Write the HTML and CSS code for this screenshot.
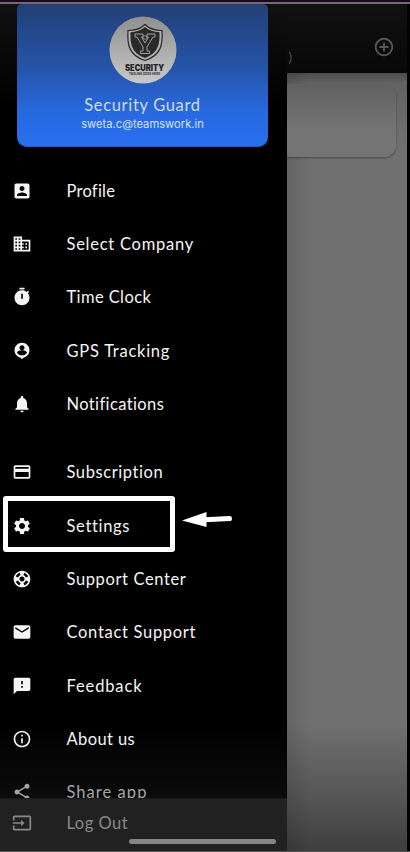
FILE: index.html
```html
<!DOCTYPE html>
<html lang="en">
<head>
<meta charset="utf-8">
<title>Security Guard menu</title>
<link rel="stylesheet" href="styles.css">
</head>
<body>
<main class="screen">
  <section class="page">
    <header class="topbar">
      <span class="paren">)</span>
      <svg class="add" viewBox="0 0 24 24"><path d="M13 7h-2v4H7v2h4v4h2v-4h4v-2h-4V7zm-1-5C6.480 2 2 6.480 2 12s4.480 10 10 10 10-4.480 10-10S17.520 2 12 2zm0 18c-4.410 0-8-3.590-8-8s3.590-8 8-8 8 3.590 8 8-3.590 8-8 8z"/></svg>
    </header>
    <div class="content"><div class="card"></div></div>
  </section>
  <aside class="drawer">
    <div class="account">
      <svg class="avatar" viewBox="0 0 68 68">
        <defs><linearGradient id="silver" x2="0" y2="1"><stop offset="0" stop-color="#8f8f8f"/><stop offset="1" stop-color="#c9c9c9"/></linearGradient></defs>
        <circle cx="34" cy="34" r="33.500" fill="url(#silver)"/>
        <path d="M36 8.500c-4 4-10 6-17 6-1 14 1 25 17 30 16-5 18-16 17-30-7 0-13-2-17-6z" fill="#b0b0b0" stroke="#292929" stroke-width="1.200"/>
        <path d="M36 11c-4 3.500-9 5-14.500 5.300-.5 12 1.500 21 14.500 25.700 13-4.700 15-13.700 14.500-25.700C45 16 40 14.500 36 11z" fill="#292929"/>
        <path d="M26 18h8v3h-1.500l3.500 6 3.500-6H38v-3h8v3h-2l-6 10v4h2.500v2.500h-9V35H34v-4l-6-10h-2z" fill="#292929" stroke="#aaa" stroke-width=".9"/>
        <circle cx="36" cy="21.500" r="1.800" fill="#292929" stroke="#aaa" stroke-width=".7"/>
        <text class="brand" x="16" y="54.500" textLength="39" lengthAdjust="spacingAndGlyphs">SECURITY</text>
        <text class="tagline" x="20" y="59" textLength="31" lengthAdjust="spacingAndGlyphs">TAGLINE GOES HERE</text>
      </svg>
      <div class="name">Security Guard</div>
      <div class="email">sweta.c@teamswork.in</div>
    </div>
    <nav class="menu">
      <a class="item"><svg viewBox="0 0 24 24"><path d="M3 5v14c0 1.100.89 2 2 2h14c1.100 0 2-.9 2-2V5c0-1.100-.9-2-2-2H5c-1.110 0-2 .9-2 2zm12 4c0 1.660-1.340 3-3 3s-3-1.340-3-3 1.340-3 3-3 3 1.340 3 3zm-9 8c0-2 4-3.100 6-3.100s6 1.100 6 3.100v1H6v-1z"/></svg><span class="profile">Profile</span></a>
      <a class="item"><svg viewBox="0 0 24 24"><path d="M12 7V3H2v18h20V7H12zM6 19H4v-2h2v2zm0-4H4v-2h2v2zm0-4H4V9h2v2zm0-4H4V5h2v2zm4 12H8v-2h2v2zm0-4H8v-2h2v2zm0-4H8V9h2v2zm0-4H8V5h2v2zm10 12h-8v-2h2v-2h-2v-2h2v-2h-2V9h8v10zm-2-8h-2v2h2v-2zm0 4h-2v2h2v-2z"/></svg><span class="company">Select Company</span></a>
      <a class="item"><svg viewBox="0 0 24 24"><path fill-rule="evenodd" d="M15 1H9v2h6V1zm-4 13h2V8h-2v6zm8.030-6.610l1.420-1.420c-.43-.51-.9-.99-1.410-1.410l-1.420 1.420C16.070 4.740 14.120 4 12 4c-4.970 0-9 4.030-9 9s4.020 9 9 9 9-4.030 9-9c0-2.120-.74-4.070-1.970-5.610z"/></svg><span class="clock">Time Clock</span></a>
      <a class="item"><svg viewBox="0 0 24 24"><path d="M12 2C7.030 2 3 6 3 11c0 4.200 2.900 7.800 6.900 8.800L12 22l2.100-2.200C18.100 18.800 21 15.200 21 11c0-5-4-9-9-9zm0 3c1.660 0 3 1.340 3 3s-1.340 3-3 3-3-1.340-3-3 1.340-3 3-3zm0 12.200c-2.500 0-4.700-1.200-6-3.100.03-2 4-3 6-3s5.970 1 6 3c-1.300 1.900-3.500 3.100-6 3.100z"/></svg><span class="tracking">GPS Tracking</span></a>
      <a class="item"><svg viewBox="0 0 24 24"><path d="M12 22c1.100 0 2-.9 2-2h-4c0 1.100.89 2 2 2zm6-6v-5c0-3.070-1.640-5.640-4.500-6.320V4c0-.83-.67-1.500-1.500-1.500s-1.500.67-1.500 1.500v.68C7.630 5.360 6 7.920 6 11v5l-2 2v1h16v-1l-2-2z"/></svg><span class="notifications">Notifications</span></a>
      <a class="item group-start"><svg viewBox="0 0 24 24"><path d="M20 4H4c-1.110 0-2 .89-2 2v12c0 1.110.89 2 2 2h16c1.110 0 2-.89 2-2V6c0-1.110-.89-2-2-2zm0 14H4v-6h16v6zm0-10H4V6h16v2z"/></svg><span class="subscription">Subscription</span></a>
      <a class="item"><svg viewBox="0 0 24 24"><path d="M19.140 12.940c.04-.3.060-.61.060-.94 0-.32-.02-.64-.07-.94l2.030-1.580c.18-.14.230-.41.120-.61l-1.920-3.320c-.12-.22-.37-.29-.59-.22l-2.390.96c-.5-.38-1.030-.7-1.620-.94l-.36-2.540c-.04-.24-.24-.41-.48-.41h-3.840c-.24 0-.43.17-.47.41l-.36 2.540c-.59.24-1.130.57-1.620.94l-2.390-.96c-.22-.08-.47 0-.59.22L2.740 8.870c-.12.210-.08.470.12.610l2.030 1.580c-.05.3-.09.630-.09.940s.02.640.07.940l-2.030 1.580c-.18.14-.23.410-.12.610l1.920 3.320c.12.220.370.290.590.220l2.390-.96c.5.380 1.030.7 1.620.94l.36 2.540c.05.240.24.410.48.410h3.840c.24 0 .44-.17.470-.41l.36-2.540c.59-.24 1.130-.56 1.620-.94l2.390.96c.22.080.470 0 .59-.22l1.920-3.320c.12-.22.070-.47-.12-.61l-2.010-1.580zM12 15.600c-1.980 0-3.600-1.620-3.600-3.600s1.620-3.600 3.600-3.600 3.600 1.620 3.600 3.600-1.620 3.600-3.600 3.600z"/></svg><span class="settings">Settings</span></a>
      <a class="item"><svg viewBox="0 0 24 24"><path d="M12 2C6.480 2 2 6.480 2 12s4.480 10 10 10 10-4.480 10-10S17.520 2 12 2zm7.460 7.120l-2.780 1.150c-.51-1.360-1.580-2.440-2.950-2.940l1.150-2.780c2.100.8 3.770 2.470 4.580 4.570zM12 15c-1.660 0-3-1.340-3-3s1.340-3 3-3 3 1.340 3 3-1.340 3-3 3zM9.130 4.540l1.170 2.780c-1.380.5-2.470 1.590-2.980 2.970L4.540 9.130c.81-2.110 2.480-3.780 4.590-4.590zM4.540 14.870l2.780-1.150c.51 1.380 1.590 2.460 2.970 2.960l-1.170 2.780c-2.100-.81-3.770-2.480-4.580-4.590zm10.340 4.590l-1.150-2.780c1.370-.51 2.450-1.590 2.950-2.970l2.780 1.170c-.81 2.100-2.480 3.770-4.580 4.580z"/></svg><span class="support">Support Center</span></a>
      <a class="item"><svg viewBox="0 0 24 24"><path d="M20 4H4c-1.100 0-1.990.9-1.990 2L2 18c0 1.100.9 2 2 2h16c1.100 0 2-.9 2-2V6c0-1.100-.9-2-2-2zm0 4l-8 5-8-5V6l8 5 8-5v2z"/></svg><span class="contact">Contact Support</span></a>
      <a class="item"><svg viewBox="0 0 24 24"><path d="M20 2H4c-1.100 0-1.990.9-1.990 2L2 22l4-4h14c1.100 0 2-.9 2-2V4c0-1.100-.9-2-2-2zm-7 12h-2v-2h2v2zm0-4h-2V6h2v4z"/></svg><span class="feedback">Feedback</span></a>
      <a class="item"><svg viewBox="0 0 24 24"><path d="M11 7h2v2h-2zm0 4h2v6h-2zm1-9C6.480 2 2 6.480 2 12s4.480 10 10 10 10-4.480 10-10S17.520 2 12 2zm0 18c-4.410 0-8-3.590-8-8s3.590-8 8-8 8 3.590 8 8-3.590 8-8 8z"/></svg><span class="about">About us</span></a>
      <a class="item share-row"><svg viewBox="0 0 24 24"><path d="M18 16.080c-.76 0-1.440.3-1.960.77L8.910 12.700c.05-.23.090-.46.090-.7s-.04-.47-.09-.7l7.050-4.110c.54.5 1.250.81 2.040.81 1.660 0 3-1.340 3-3s-1.340-3-3-3-3 1.340-3 3c0 .24.040.47.090.7L8.040 9.810C7.500 9.310 6.790 9 6 9c-1.660 0-3 1.340-3 3s1.340 3 3 3c.79 0 1.500-.31 2.040-.81l7.120 4.160c-.05.21-.08.430-.08.650 0 1.610 1.310 2.920 2.920 2.920s2.920-1.310 2.920-2.920-1.310-2.920-2.920-2.920z"/></svg><span class="share">Share app</span></a>
    </nav>
    <footer class="logout">
      <svg viewBox="0 0 24 24"><path d="M21 3.010H3c-1.100 0-2 .9-2 2V9h2V4.990h18v14.030H3V15H1v4.010c0 1.100.9 1.980 2 1.980h18c1.100 0 2-.88 2-1.980v-14c0-1.110-.9-2-2-2zM11 16l4-4-4-4v3H1v2h10v3z"/></svg><span class="out">Log Out</span>
    </footer>
  </aside>
  <div class="highlight"></div>
  <svg class="arrow" viewBox="0 0 52 18"><path d="M1 8.500L25.500 0v15z"/><path class="shaft" d="M24 7.700L48.500 6.500"/></svg>
  <div class="home-bar"></div>
</main>
</body>
</html>
```
FILE: styles.css
```css
* { box-sizing: border-box; }
body { margin: 0; background: #000; }
.screen {
  position: relative;
  width: 410px;
  height: 852px;
  overflow: hidden;
  border-top: 2px solid #1e071e;
  border-bottom: 1px solid #555;
  font-family: Lato, "Open Sans", sans-serif;
  color: #f5f5f5;
}
.screen::before {
  content: "";
  position: absolute;
  z-index: 3;
  inset: 0 0 auto;
  height: 2px;
  background: #706b70;
}
.page {
  display: flex;
  flex-direction: column;
  height: 100%;
  padding-right: 3px;
  background: #030303;
}
.topbar {
  display: flex;
  justify-content: flex-end;
  flex: 0 0 71px;
  padding: 34px 12px 0 0;
  background: linear-gradient(#111, #080808);
}
.paren { margin: 14px 81px 0 0; font-size: 13px; line-height: 15px; color: #555; }
.add { width: 22px; height: 22px; fill: #565656; }
.content {
  flex: 1;
  padding: 11px 11px 0 0;
  background:
    linear-gradient(90deg, transparent 284px, rgba(0,0,0,.13) 284px, transparent 310px),
    linear-gradient(#4c4c4c 0, #626262 10px, #707070 70px, #707070 650px, #555 725px, #3e3e3e 100%);
}
.card {
  height: 73px;
  border-radius: 0 12px 12px 0;
  background: linear-gradient(#606060, #747474 60%);
  box-shadow: 0 1px 2px rgba(0,0,0,.38);
}
.drawer {
  position: absolute;
  top: 2px;
  left: 0;
  display: flex;
  flex-direction: column;
  width: 287px;
  height: 847px;
  background: linear-gradient(#111 0, #000 100px, #000 720px, #0b0b0b 795px);
}
.account {
  display: flex;
  flex-direction: column;
  align-items: center;
  flex: 0 0 143px;
  margin: 0 19px 0 17px;
  padding-top: 12px;
  border-radius: 5px 5px 10px 10px;
  background: linear-gradient(#233f76, #2453a5 42%, #2869e0 76%, #286ff1);
  box-shadow: inset 0 -1px #245bbd;
}
.avatar { flex: none; width: 68px; height: 68px; }
.brand { font: 900 8.500px Inter, sans-serif; fill: #222; }
.tagline { font: 700 3.500px Inter, sans-serif; fill: #333; }
.name { margin-top: 11px; font-size: 16.500px; line-height: 20px; letter-spacing: .67px; color: #cfdae8; white-space: nowrap; }
.email { margin-top: 1px; font: 11.200px/16px Inter, sans-serif; color: #d5e0ee; white-space: nowrap; }
.menu { flex: 1; min-height: 0; padding-top: 17px; overflow: hidden; }
.item { display: flex; align-items: center; height: 53.350px; padding-left: 12px; }
.item svg, .logout svg { flex: none; width: 20px; height: 20px; fill: currentColor; }
.item span, .logout span { margin-left: 34.500px; font-size: 16.500px; line-height: 22px; letter-spacing: .5px; white-space: nowrap; }
.item .profile { letter-spacing: .25px; }
.item .company { letter-spacing: .75px; }
.item .clock { letter-spacing: .4px; }
.item .tracking { letter-spacing: .75px; }
.item .notifications { letter-spacing: .38px; }
.item .subscription { letter-spacing: .58px; }
.item .settings { letter-spacing: .66px; }
.item .support { letter-spacing: .62px; }
.item .contact { letter-spacing: .7px; }
.item .feedback { letter-spacing: .87px; }
.item .about { letter-spacing: .4px; }
.item .share { letter-spacing: 1.050px; }
.group-start { margin-top: 15px; }
.share-row { color: #a5a5a5; }
.logout {
  display: flex;
  align-items: flex-start;
  flex: 0 0 53px;
  padding: 14px 0 0 12px;
  border-top: 1px solid #191919;
  background: #212121;
  color: #898989;
}
.logout span { margin-top: -1px; }
.highlight {
  position: absolute;
  top: 494px;
  left: 3px;
  width: 172px;
  height: 56px;
  border: 5px solid #fff;
  border-radius: 3px;
}
.arrow { position: absolute; top: 509.500px; left: 181px; width: 52px; height: 18px; fill: #fff; }
.shaft { fill: none; stroke: #fff; stroke-width: 5; stroke-linecap: round; }
.home-bar {
  position: absolute;
  top: 837px;
  left: 129px;
  width: 147px;
  height: 5px;
  border-radius: 3px;
  background: #858585;
}
```
